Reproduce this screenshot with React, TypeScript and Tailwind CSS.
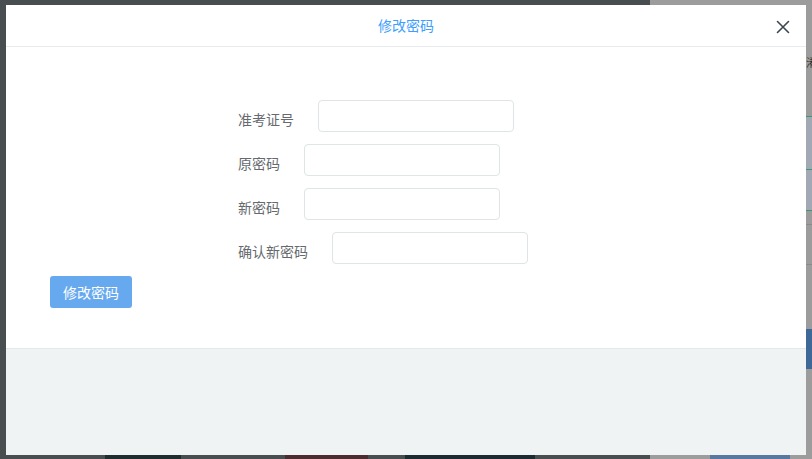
import React from 'react';

const fields = [
  { label: '准考证号', type: 'text' },
  { label: '原密码', type: 'password' },
  { label: '新密码', type: 'password' },
  { label: '确认新密码', type: 'password' },
];

const CloseIcon: React.FC = () => (
  <svg width="14" height="14" viewBox="0 0 14 14" fill="none" stroke="#3b4650" strokeWidth="1.6" strokeLinecap="round">
    <path d="M1.5 1.5L12.5 12.5M12.5 1.5L1.5 12.5" />
  </svg>
);

export default function App() {
  return (
    <div
      className="relative w-[812px] h-[459px] overflow-hidden flex"
      style={{ fontFamily: '"Noto Sans CJK SC", "Noto Sans", sans-serif' }}
    >
      {/* page behind the overlay */}
      <div className="flex-1 bg-[#484d50] flex flex-col justify-end">
        <div className="h-[4px] flex">
          <div className="w-[105px]" />
          <div className="w-[76px] bg-[#1e2d30]" />
          <div className="w-[104px]" />
          <div className="w-[83px] bg-[#4b2c31]" />
          <div className="w-[37px]" />
          <div className="w-[130px] bg-[#1c2a31]" />
        </div>
      </div>
      <div className="w-[162px] bg-[#9c9c9c] flex flex-col">
        <div className="h-[56px]" />
        <div className="h-[12px] pl-[156px] text-[11px] leading-[12px] text-[#333]">淆</div>
        <div className="h-[48px]" />
        <div className="h-[54px] border-t border-b border-[#3b9a6c] bg-[#a2a8b4]" />
        <div className="h-[41px] border-b border-[#3b9a6c] bg-[#a2a8b4]" />
        <div className="h-[13px]" />
        <div className="h-[41px] border-t border-b border-[#8a8a8a]" />
        <div className="h-[64px]" />
        <div className="h-[40px] bg-[#3e6897]" />
        <div className="flex-1" />
        <div className="h-[4px] ml-[60px] w-[80px] bg-[#5878a0]" />
      </div>

      {/* modal */}
      <div className="absolute left-[6px] top-[5px] w-[800px] h-[450px] bg-white flex flex-col">
        <div className="relative h-[42px] border-b border-[#e8ebed] flex items-center justify-center">
          <span className="text-[14px] text-[#409eff]">修改密码</span>
          <button className="absolute right-[16px] top-[15px]">
            <CloseIcon />
          </button>
        </div>

        <div className="pt-[53px] pb-[40px] pl-[44px] border-b border-[#e4e8ea]">
          <div className="pl-[188px] flex flex-col gap-[12px]">
            {fields.map((f) => (
              <div key={f.label} className="flex items-start">
                <label className="pt-[9px] mr-[24px] text-[14px] leading-[20px] text-[#666a6e]">{f.label}</label>
                <input
                  type={f.type}
                  className="w-[196px] h-[32px] border border-[#dfe4e6] rounded-[4px] outline-none px-2"
                />
              </div>
            ))}
          </div>
          <button className="mt-[12px] w-[82px] h-[32px] rounded-[3px] bg-[#66a9ee] text-white text-[14px]">
            修改密码
          </button>
        </div>

        <div className="flex-1 bg-[#eff3f4]" />
      </div>
    </div>
  );
}
